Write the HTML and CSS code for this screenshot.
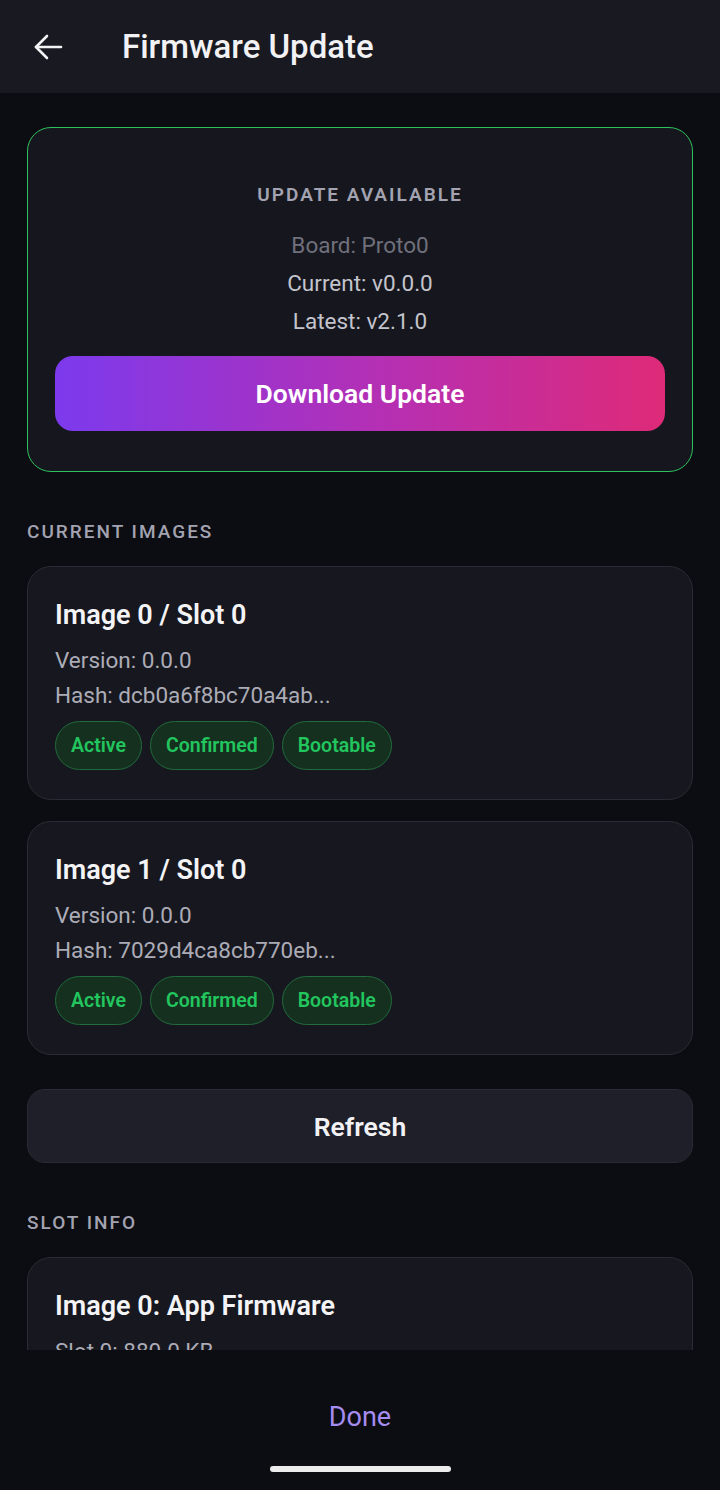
FILE: index.html
```html
<!DOCTYPE html>
<html>
<head>
  <title>Firmware Update</title>
  <link rel="stylesheet" href="styles.css">
</head>
<body>
  <div class="app">
    <header class="top-bar">
      <button class="back-button" aria-label="Back">
        <svg width="30" height="30" viewBox="0 0 30 30" fill="none" stroke="#f2f2f5" stroke-width="2.6" stroke-linecap="round" stroke-linejoin="round">
          <path d="M28 15H3"/>
          <path d="M14 4L3 15l11 11"/>
        </svg>
      </button>
      <h1 class="page-title">Firmware Update</h1>
    </header>

    <main class="content">
      <section class="update-card">
        <div class="update-label">UPDATE AVAILABLE</div>
        <div class="update-line muted">Board: Proto0</div>
        <div class="update-line">Current: v0.0.0</div>
        <div class="update-line">Latest: v2.1.0</div>
        <button class="download-button">Download Update</button>
      </section>

      <h2 class="section-label">CURRENT IMAGES</h2>
      <div class="image-list">
        <div class="image-card">
          <div class="image-title">Image 0 / Slot 0</div>
          <div class="image-line">Version: 0.0.0</div>
          <div class="image-line">Hash: dcb0a6f8bc70a4ab...</div>
          <div class="badges">
            <span class="badge">Active</span>
            <span class="badge">Confirmed</span>
            <span class="badge">Bootable</span>
          </div>
        </div>
        <div class="image-card">
          <div class="image-title">Image 1 / Slot 0</div>
          <div class="image-line">Version: 0.0.0</div>
          <div class="image-line">Hash: 7029d4ca8cb770eb...</div>
          <div class="badges">
            <span class="badge">Active</span>
            <span class="badge">Confirmed</span>
            <span class="badge">Bootable</span>
          </div>
        </div>
      </div>

      <button class="refresh-button">Refresh</button>

      <h2 class="section-label">SLOT INFO</h2>
      <div class="image-card">
        <div class="image-title">Image 0: App Firmware</div>
        <div class="image-line">Slot 0: 880.0 KB</div>
      </div>
    </main>

    <footer class="bottom-bar">
      <button class="done-button">Done</button>
      <div class="home-indicator"></div>
    </footer>
  </div>
</body>
</html>
```

FILE: styles.css
```css
/* Firmware update screen */
body {
  margin: 0;
  background-color: #0c0d12;
  font-family: Roboto, "Liberation Sans", sans-serif;
  color: #f2f2f5;
}
button {
  font-family: inherit;
  cursor: pointer;
}
.app {
  width: 720px;
  height: 1490px;
  display: flex;
  flex-direction: column;
  overflow: hidden;
}
.top-bar {
  height: 93px;
  flex-shrink: 0;
  display: flex;
  align-items: center;
  background-color: #181921;
}
.back-button {
  background: none;
  border: none;
  padding: 0;
  margin: 0 0 0 33px;
  width: 30px;
  height: 30px;
  display: flex;
}
.page-title {
  margin: 0 0 0 59px;
  font-size: 33px;
  font-weight: 500;
}
.content {
  height: 1257px;
  flex-shrink: 0;
  overflow: hidden;
  padding: 34px 27px 0;
  box-sizing: border-box;
}
.update-card {
  border: 1.5px solid #2fc05e;
  border-radius: 24px;
  background-color: #16171e;
  padding: 55px 27px 40px;
  text-align: center;
}
.update-label {
  font-size: 19px;
  line-height: 24px;
  font-weight: 600;
  letter-spacing: 2px;
  color: #a3a3b1;
  margin-bottom: 19px;
}
.update-line {
  font-size: 22.5px;
  line-height: 38px;
  color: #c4c4cd;
}
.update-line.muted {
  color: #70707c;
}
.download-button {
  display: block;
  width: 100%;
  height: 75px;
  margin-top: 16px;
  border: none;
  border-radius: 18px;
  background: linear-gradient(90deg, #7c3aed 0%, #b62fb2 55%, #de2a78 100%);
  color: #fff;
  font-size: 26.5px;
  font-weight: 600;
}
.section-label {
  margin: 48px 0 22px;
  font-size: 19px;
  line-height: 24px;
  font-weight: 500;
  letter-spacing: 2px;
  color: #a3a3b1;
}
.image-list {
  display: flex;
  flex-direction: column;
  gap: 21px;
}
.image-card {
  border: 1px solid #2a2b34;
  border-radius: 24px;
  background-color: #17181f;
  padding: 32px 27px 29px;
}
.image-title {
  font-size: 27px;
  line-height: 32px;
  font-weight: 600;
  color: #f4f4f7;
  margin-bottom: 12px;
}
.image-line {
  font-size: 22.5px;
  line-height: 35px;
  color: #acacb7;
}
.badges {
  display: flex;
  gap: 8px;
  margin-top: 8px;
}
.badge {
  height: 49px;
  box-sizing: border-box;
  display: flex;
  align-items: center;
  padding: 0 15px;
  border: 1px solid #216b3c;
  border-radius: 25px;
  background-color: #15301f;
  color: #22c55e;
  font-size: 19.5px;
  font-weight: 600;
}
.refresh-button {
  display: block;
  width: 100%;
  height: 74px;
  margin-top: 34px;
  border: 1px solid #2a2b35;
  border-radius: 18px;
  background-color: #1e1f29;
  color: #f2f2f5;
  font-size: 26.5px;
  font-weight: 600;
}
.bottom-bar {
  flex: 1;
  display: flex;
  flex-direction: column;
  align-items: center;
  background-color: #0c0d12;
}
.done-button {
  margin-top: 50px;
  background: none;
  border: none;
  padding: 0;
  font-size: 27px;
  line-height: 34px;
  color: #a58cf0;
}
.home-indicator {
  margin-top: 32px;
  width: 181px;
  height: 6px;
  border-radius: 3px;
  background-color: #ececec;
}
```
